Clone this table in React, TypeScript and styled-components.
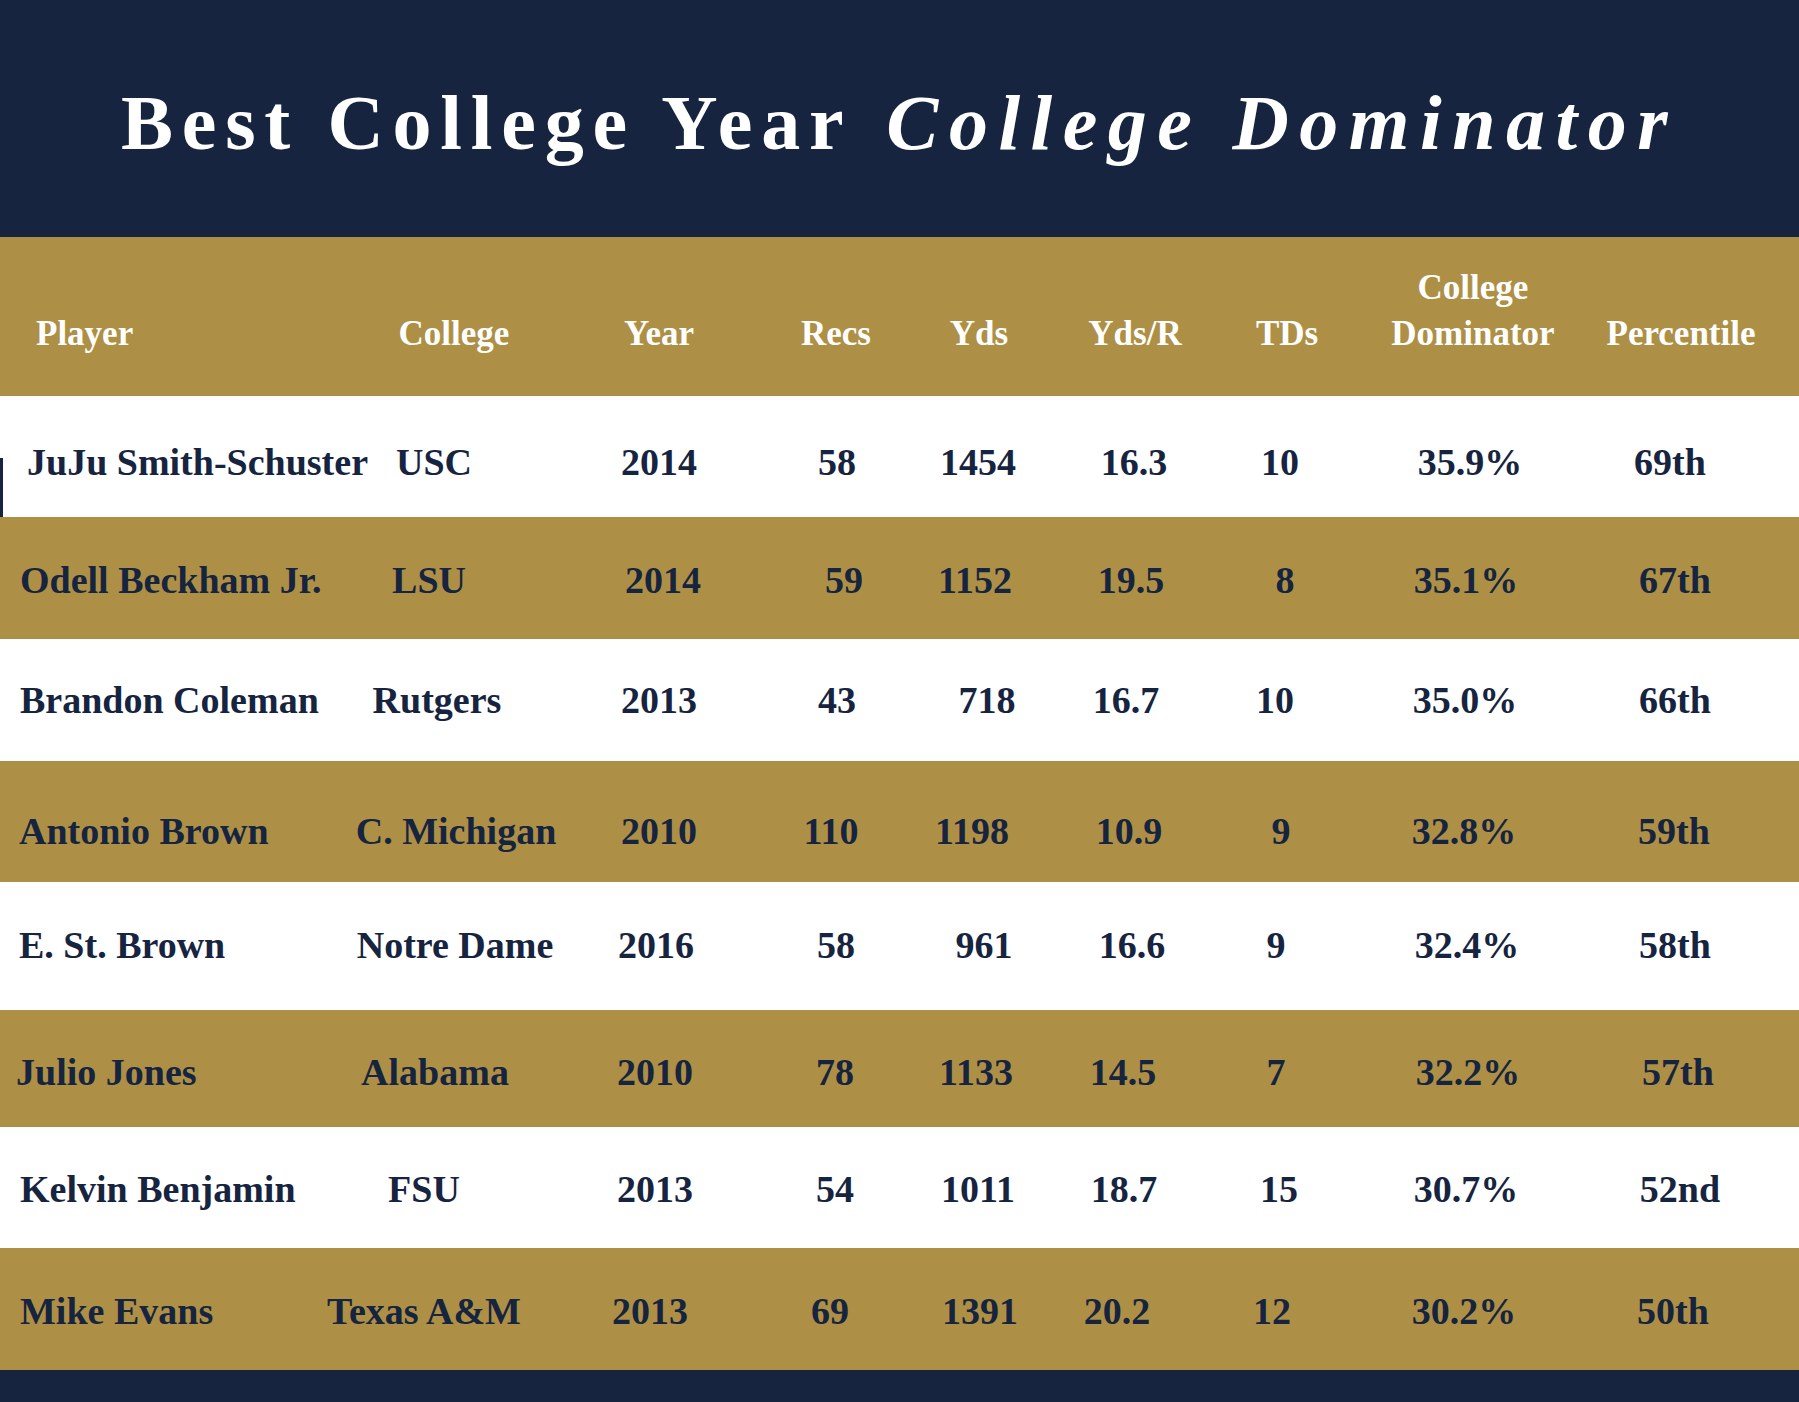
import React from "react";
import styled, { createGlobalStyle } from "styled-components";

const NAVY = "#16243f";
const GOLD = "#ad9045";
const WHITE = "#ffffff";

const GlobalStyle = createGlobalStyle`
  html, body { margin: 0; padding: 0; background: #ffffff; }
  body { font-family: "Liberation Serif", "Times New Roman", serif; }
  * { box-sizing: border-box; }
`;

const COLS = "340px 200px 236px 120px 164px 140px 158px 218px 198px 1fr";

const Page = styled.div`
  width: 1799px;
  display: flex;
  flex-direction: column;
`;

const TitleBar = styled.header`
  height: 237px;
  background: ${NAVY};
  display: flex;
  align-items: center;
  justify-content: center;
  padding-top: 9px;
`;

const Title = styled.h1`
  margin: 0;
  font-family: "Liberation Serif", "Times New Roman", serif;
  font-weight: 700;
  font-size: 78px;
  line-height: 1;
  color: ${WHITE};
  letter-spacing: 8.8px;
  white-space: nowrap;
`;

const TitleEm = styled.em`
  font-style: italic;
  letter-spacing: 10.5px;
  margin-left: 7px;
`;

const HeadRow = styled.div`
  display: grid;
  grid-template-columns: ${COLS};
  align-items: end;
  height: 159px;
  padding-bottom: 39px;
  background: ${GOLD};
  color: ${WHITE};
  font-size: 35px;
  font-weight: 700;
  line-height: 46px;
`;

const HeadPlayer = styled.div<{ $x: number }>`
  padding-left: ${(p) => p.$x}px;
  white-space: nowrap;
`;

const HeadCell = styled.div<{ $dx: number }>`
  display: flex;
  flex-direction: column;
  align-items: center;
  text-align: center;
  white-space: nowrap;
  transform: translateX(${(p) => p.$dx}px);
`;

const Row = styled.div<{ $bg: string; $h: number; $dy: number; $mark?: boolean }>`
  position: relative;
  display: grid;
  grid-template-columns: ${COLS};
  align-items: center;
  height: ${(p) => p.$h}px;
  padding-top: ${(p) => Math.max(0, p.$dy * 2)}px;
  padding-bottom: ${(p) => Math.max(0, -p.$dy * 2)}px;
  background: ${(p) => p.$bg};
  color: ${NAVY};
  font-size: 38px;
  font-weight: 700;
  line-height: 38px;

  ${(p) =>
    p.$mark
      ? `&::before {
    content: "";
    position: absolute;
    left: 0;
    bottom: 0;
    width: 3px;
    height: 59px;
    background: ${NAVY};
  }`
      : ""}
`;

const PlayerCell = styled.div<{ $x: number }>`
  padding-left: ${(p) => p.$x}px;
  white-space: nowrap;
`;

const Cell = styled.div<{ $dx: number }>`
  display: flex;
  justify-content: center;
  white-space: nowrap;
  transform: translateX(${(p) => p.$dx}px);
`;

const Footer = styled.div`
  height: 32px;
  background: ${NAVY};
`;

type CellData = [string, number];
type RowData = {
  player: string;
  px: number;
  dy: number;
  h: number;
  bg: string;
  mark?: boolean;
  cells: CellData[];
};

const headers: { label: string[]; dx: number }[] = [
  { label: ["College"], dx: 14 },
  { label: ["Year"], dx: 1 },
  { label: ["Recs"], dx: 0 },
  { label: ["Yds"], dx: 1 },
  { label: ["Yds/R"], dx: 5 },
  { label: ["TDs"], dx: 8 },
  { label: ["College", "Dominator"], dx: 6 },
  { label: ["Percentile"], dx: 6 },
];

const rows: RowData[] = [
  {
    player: "JuJu Smith-Schuster", px: 27, dy: 5, h: 121, bg: WHITE, mark: true,
    cells: [["USC", -6], ["2014", 1], ["58", 1], ["1454", 0], ["16.3", 4], ["10", 1], ["35.9%", 3], ["69th", -5]],
  },
  {
    player: "Odell Beckham Jr.", px: 20, dy: 2, h: 122, bg: GOLD,
    cells: [["LSU", -11], ["2014", 5], ["59", 8], ["1152", -3], ["19.5", 1], ["8", 6], ["35.1%", -1], ["67th", 0]],
  },
  {
    player: "Brandon Coleman", px: 20, dy: 0, h: 122, bg: WHITE,
    cells: [["Rutgers", -3], ["2013", 1], ["43", 1], ["718", 9], ["16.7", -4], ["10", -4], ["35.0%", -2], ["66th", 0]],
  },
  {
    player: "Antonio Brown", px: 19, dy: 9, h: 121, bg: GOLD,
    cells: [["C. Michigan", 16], ["2010", 1], ["110", -5], ["1198", -6], ["10.9", -1], ["9", 2], ["32.8%", -3], ["59th", -1]],
  },
  {
    player: "E. St. Brown", px: 19, dy: -1, h: 128, bg: WHITE,
    cells: [["Notre Dame", 15], ["2016", -2], ["58", 0], ["961", 6], ["16.6", 2], ["9", -3], ["32.4%", 0], ["58th", 0]],
  },
  {
    player: "Julio Jones", px: 16, dy: 3, h: 117, bg: GOLD,
    cells: [["Alabama", -5], ["2010", -3], ["78", -1], ["1133", -2], ["14.5", -7], ["7", -3], ["32.2%", 1], ["57th", 3]],
  },
  {
    player: "Kelvin Benjamin", px: 20, dy: 1, h: 121, bg: WHITE,
    cells: [["FSU", -16], ["2013", -3], ["54", -1], ["1011", 0], ["18.7", -6], ["15", 0], ["30.7%", -1], ["52nd", 5]],
  },
  {
    player: "Mike Evans", px: 20, dy: 2, h: 122, bg: GOLD,
    cells: [["Texas A&M", -16], ["2013", -8], ["69", -6], ["1391", 2], ["20.2", -13], ["12", -7], ["30.2%", -3], ["50th", -2]],
  },
];

export default function App() {
  return (
    <>
      <GlobalStyle />
      <Page>
        <TitleBar>
          <Title>
            Best College Year <TitleEm>College Dominator</TitleEm>
          </Title>
        </TitleBar>
        <HeadRow>
          <HeadPlayer $x={36}>Player</HeadPlayer>
          {headers.map((h, i) => (
            <HeadCell key={i} $dx={h.dx}>
              {h.label.map((l) => (
                <span key={l}>{l}</span>
              ))}
            </HeadCell>
          ))}
        </HeadRow>
        {rows.map((r) => (
          <Row key={r.player} $bg={r.bg} $h={r.h} $dy={r.dy} $mark={r.mark}>
            <PlayerCell $x={r.px}>{r.player}</PlayerCell>
            {r.cells.map(([text, dx], i) => (
              <Cell key={i} $dx={dx}>
                {text}
              </Cell>
            ))}
          </Row>
        ))}
        <Footer />
      </Page>
    </>
  );
}
